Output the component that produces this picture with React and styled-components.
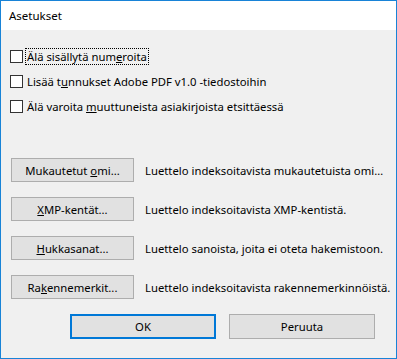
import React from 'react';
import styled, { createGlobalStyle } from 'styled-components';

const GlobalStyle = createGlobalStyle`
  html, body { margin: 0; padding: 0; background: #f0f0f0; }
  body { font-family: "Noto Sans", "Open Sans", sans-serif; font-size: 11.3px; color: #000; }
`;

const Window = styled.div`
  width: 397px;
  height: 359px;
  box-sizing: border-box;
  border: 1px solid #1883d7;
  background: #f0f0f0;
  display: flex;
  flex-direction: column;
`;

const TitleBar = styled.div`
  height: 29px;
  background: #fff;
  display: flex;
  align-items: center;
  padding-left: 8px;
  font-size: 11.5px;
`;

const Body = styled.div`
  flex: 1;
  display: flex;
  flex-direction: column;
  padding: 20px 0 0 9px;
`;

const CheckList = styled.div`
  display: flex;
  flex-direction: column;
  gap: 12px;
`;

const CheckRow = styled.label`
  display: flex;
  align-items: center;
  height: 13px;
  gap: 3px;
`;

const Box = styled.span`
  width: 11px;
  height: 11px;
  border: 1px solid #333;
  background: #fff;
  flex: none;
`;

const Label = styled.span`
  padding: 0 1px;
  line-height: 15px;
  outline: ${p => (p.$focus ? '1px dotted #000' : 'none')};
`;

const Actions = styled.div`
  display: flex;
  flex-direction: column;
  gap: 15px;
  margin-top: 45px;
`;

const ActionRow = styled.div`
  display: flex;
  align-items: center;
  gap: 11px;
`;

const Button = styled.button`
  flex: none;
  box-sizing: border-box;
  width: ${p => p.$w || 123}px;
  height: ${p => p.$h || 24}px;
  margin-left: 1px;
  background: #e1e1e1;
  border: ${p => (p.$default ? '2px solid #0078d7' : '1px solid #adadad')};
  font: inherit;
  color: #000;
  padding: 0;
`;

const Desc = styled.span`
  white-space: nowrap;
`;

const Footer = styled.div`
  display: flex;
  gap: 12px;
  margin-top: 15px;
  padding-left: 59px;
`;

const U = styled.span`
  text-decoration: underline;
`;

export default function App() {
  return (
    <>
      <GlobalStyle />
      <Window>
        <TitleBar>Asetukset</TitleBar>
        <Body>
          <CheckList>
            <CheckRow>
              <Box />
              <Label $focus>Älä sisällytä num<U>e</U>roita</Label>
            </CheckRow>
            <CheckRow>
              <Box />
              <Label>Lisää t<U>u</U>nnukset Adobe PDF v1.0 -tiedostoihin</Label>
            </CheckRow>
            <CheckRow>
              <Box />
              <Label>Älä varoita <U>m</U>uuttuneista asiakirjoista etsittäessä</Label>
            </CheckRow>
          </CheckList>
          <Actions>
            <ActionRow>
              <Button>Mukautetut <U>o</U>mi...</Button>
              <Desc>Luettelo indeksoitavista mukautetuista omi…</Desc>
            </ActionRow>
            <ActionRow>
              <Button><U>X</U>MP-kentät...</Button>
              <Desc>Luettelo indeksoitavista XMP-kentistä.</Desc>
            </ActionRow>
            <ActionRow>
              <Button><U>H</U>ukkasanat...</Button>
              <Desc>Luettelo sanoista, joita ei oteta hakemistoon.</Desc>
            </ActionRow>
            <ActionRow>
              <Button>Ra<U>k</U>ennemerkit...</Button>
              <Desc>Luettelo indeksoitavista rakennemerkinnöistä.</Desc>
            </ActionRow>
          </Actions>
          <Footer>
            <Button $default $w={146} $h={25}>OK</Button>
            <Button $w={146} $h={25}>Peruuta</Button>
          </Footer>
        </Body>
      </Window>
    </>
  );
}
